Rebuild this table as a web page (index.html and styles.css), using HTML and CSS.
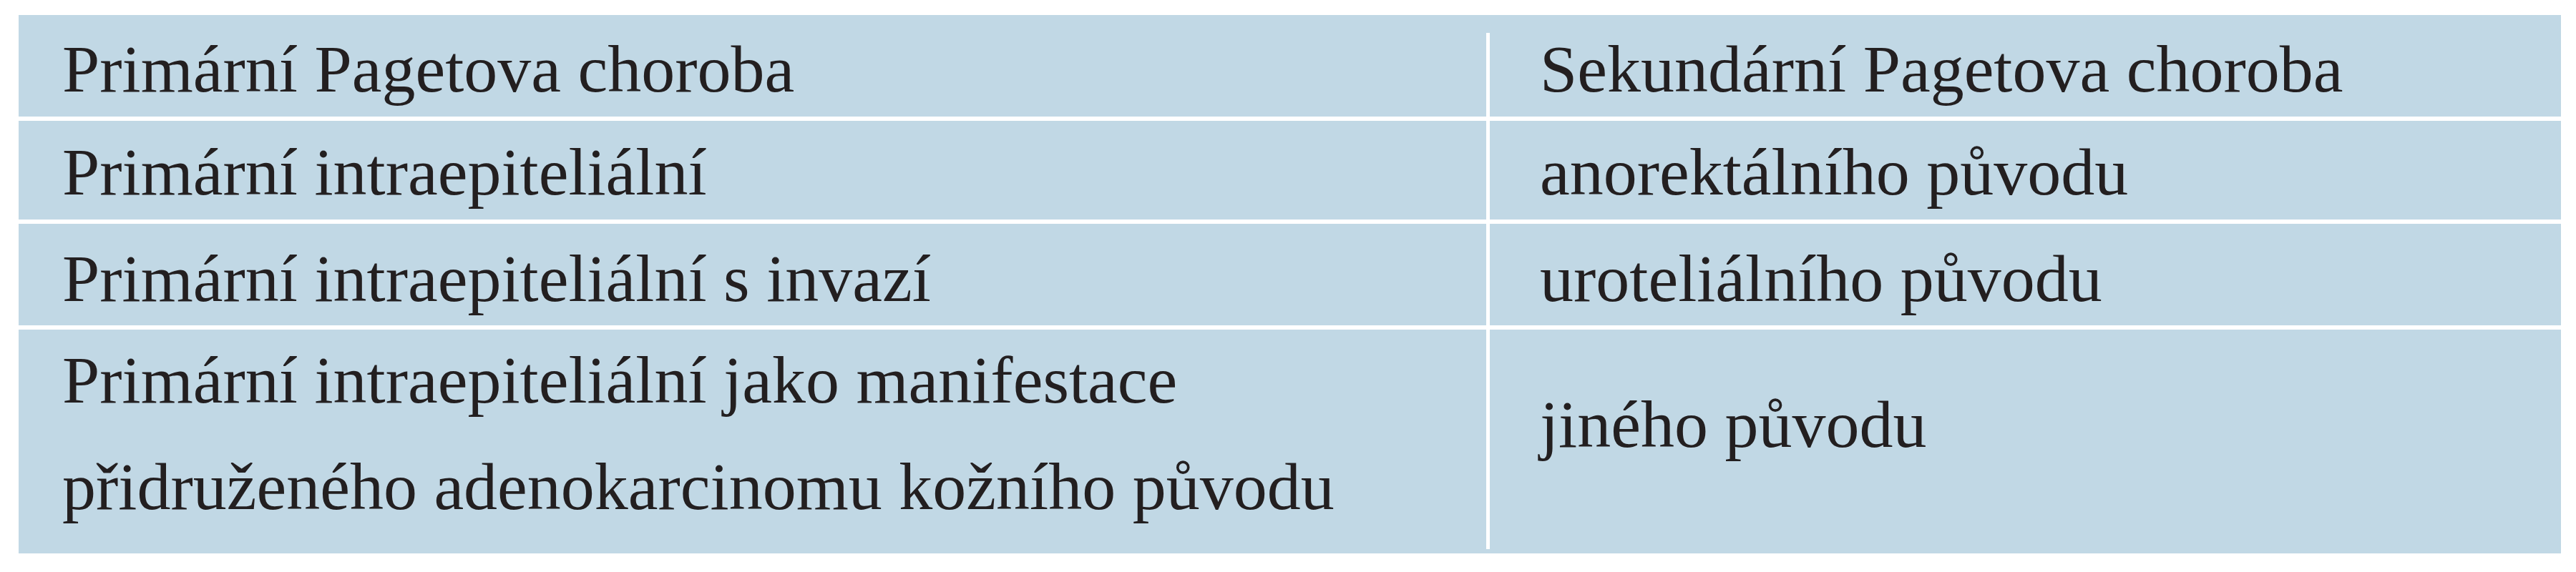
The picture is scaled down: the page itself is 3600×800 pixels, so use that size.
FILE: index.html
```html
<!DOCTYPE html>
<html lang="cs">
<head>
<meta charset="utf-8">
<title>Pagetova choroba</title>
<link rel="stylesheet" href="styles.css">
</head>
<body>
<div class="table">
  <div class="row r1">
    <div class="cell left">Primární Pagetova choroba</div>
    <div class="cell right">Sekundární Pagetova choroba</div>
  </div>
  <div class="row r2">
    <div class="cell left">Primární intraepiteliální</div>
    <div class="cell right">anorektálního původu</div>
  </div>
  <div class="row r3">
    <div class="cell left">Primární intraepiteliální s invazí</div>
    <div class="cell right">uroteliálního původu</div>
  </div>
  <div class="row r4">
    <div class="cell left multi">Primární intraepiteliální jako manifestace<br>přidruženého adenokarcinomu kožního původu</div>
    <div class="cell right">jiného původu</div>
  </div>
  <div class="divider"></div>
</div>
</body>
</html>
```
FILE: styles.css
```css
html, body {
  margin: 0;
  padding: 0;
  background: #ffffff;
}

.table {
  position: relative;
  margin: 21px 0 0 26px;
  width: 3553px;
  display: flex;
  flex-direction: column;
  gap: 6px;
  font-family: "Liberation Serif", "Times New Roman", serif;
  font-size: 94px;
  color: #231f20;
}

.row {
  display: grid;
  grid-template-columns: 2056px 1fr;
  background: #c1d8e5;
  line-height: 120px;
  box-sizing: border-box;
}

.cell {
  white-space: nowrap;
}

.cell.left {
  padding-left: 61px;
}

.cell.right {
  padding-left: 70px;
}

.r1 { height: 142px; }
.r1 .cell { padding-top: 15px; }

.r2 { height: 138px; }
.r2 .cell { padding-top: 11px; }

.r3 { height: 142px; }
.r3 .cell { padding-top: 16px; }

.r4 { height: 313px; }
.r4 .cell.multi {
  line-height: 149px;
  margin-top: -4px;
}
.r4 .cell.right { padding-top: 72px; }

.divider {
  position: absolute;
  left: 2051px;
  top: 25px;
  bottom: 6px;
  width: 5px;
  background: #ffffff;
}
```
